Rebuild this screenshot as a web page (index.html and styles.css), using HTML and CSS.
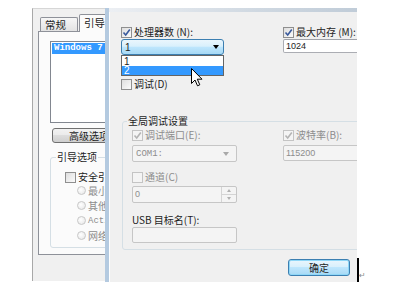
FILE: index.html
```html
<!DOCTYPE html>
<html lang="zh-CN">
<head>
    <meta charset="UTF-8">
    <title>系统配置</title>
    <link rel="stylesheet" href="styles.css">
</head>
<body>
    <div class="scene">
        <!-- system configuration window, behind -->
        <div class="back-win">
            <div class="tabs">
                <div class="tab">常规</div>
                <div class="tab active">引导</div>
            </div>
            <div class="tab-panel">
                <div class="listbox">
                    <div class="list-item selected">Windows 7</div>
                </div>
                <div class="btn adv-btn">高级选项(V)...</div>
                <fieldset class="group boot-group">
                    <legend>引导选项</legend>
                    <div class="check-row"><span class="cb"></span>安全引导(F)</div>
                    <div class="radio-row"><span class="rb"></span>最小(N)</div>
                    <div class="radio-row"><span class="rb"></span>其他外壳(L)</div>
                    <div class="radio-row"><span class="rb"></span><span class="latin">Active Directory</span></div>
                    <div class="radio-row"><span class="rb"></span>网络(W)</div>
                </fieldset>
            </div>
        </div>

        <!-- boot advanced options dialog -->
        <div class="front-win">
            <div class="frame-top"></div>
            <div class="front-body">
                <div class="top-grid">
                    <div class="col">
                        <div class="check-row">
                            <span class="cb checked"><svg width="9" height="9" viewBox="0 0 9 9"><path d="M1.5 4.5 L3.7 7 L7.8 1.5" fill="none" stroke="#3a5a9c" stroke-width="1.6"/></svg></span>
                            处理器数 (N):
                        </div>
                        <div class="combo-wrap">
                            <div class="combo focused">
                                <span class="combo-val">1</span>
                                <span class="arrow"></span>
                            </div>
                            <div class="dropdown">
                                <div class="dd-item">1</div>
                                <div class="dd-item selected">2</div>
                            </div>
                            <svg class="pointer" width="12" height="19" viewBox="0 0 12 19">
                                <path d="M0.5 0.5 L0.5 15.5 L4 12 L6.5 17.8 L8.8 16.8 L6.3 11.2 L11 11.2 Z" fill="#fff" stroke="#000" stroke-width="1"/>
                            </svg>
                        </div>
                        <div class="check-row debug-row"><span class="cb"></span>调试(D)</div>
                    </div>
                    <div class="col">
                        <div class="check-row">
                            <span class="cb checked"><svg width="9" height="9" viewBox="0 0 9 9"><path d="M1.5 4.5 L3.7 7 L7.8 1.5" fill="none" stroke="#3a5a9c" stroke-width="1.6"/></svg></span>
                            最大内存 (M):
                        </div>
                        <div class="textbox mem-box">1024</div>
                    </div>
                </div>

                <fieldset class="group debug-group">
                    <legend>全局调试设置</legend>
                    <div class="group-cols">
                        <div class="gcol left">
                            <div class="check-row disabled">
                                <span class="cb checked"><svg width="9" height="9" viewBox="0 0 9 9"><path d="M1.5 4.5 L3.7 7 L7.8 1.5" fill="none" stroke="#b4b4b4" stroke-width="1.6"/></svg></span>
                                调试端口(E):
                            </div>
                            <div class="combo disabled">
                                <span class="combo-val mono">COM1:</span>
                                <span class="arrow grey"></span>
                            </div>
                            <div class="check-row disabled channel-row"><span class="cb"></span>通道(C)</div>
                            <div class="spinner">
                                <span class="spin-val">0</span>
                                <span class="spin-btns">
                                    <span class="spin-up"></span>
                                    <span class="spin-down"></span>
                                </span>
                            </div>
                            <div class="label-row">USB 目标名(T):</div>
                            <div class="textbox disabled usb-box"></div>
                        </div>
                        <div class="gcol right">
                            <div class="check-row disabled">
                                <span class="cb checked"><svg width="9" height="9" viewBox="0 0 9 9"><path d="M1.5 4.5 L3.7 7 L7.8 1.5" fill="none" stroke="#b4b4b4" stroke-width="1.6"/></svg></span>
                                波特率(B):
                            </div>
                            <div class="textbox disabled baud-box">115200</div>
                        </div>
                    </div>
                </fieldset>

                <div class="btn-row">
                    <div class="btn ok-btn">确定</div>
                </div>
            </div>
        </div>

        <div class="caret"></div>
        <div class="para-mark">↵</div>
    </div>
</body>
</html>
```

FILE: styles.css
```css
body {
    margin: 0;
    background-color: #fff;
    font-family: "Noto Sans CJK SC", "Liberation Sans", sans-serif;
    font-size: 10px;
    color: #1e1e1e;
}
.scene {
    display: flex;
    align-items: flex-start;
    padding: 8px 0 0 32px;
    height: 277px;
    overflow: hidden;
}

/* back window */
.back-win {
    width: 73px;
    height: 273px;
    box-sizing: border-box;
    flex-shrink: 0;
    background-color: #f0f0f0;
    border-left: 1px solid #a8a8a8;
    border-top: 1px solid #d6d6d6;
    padding: 5px 0 0 5px;
    overflow: hidden;
}
.tabs {
    display: flex;
    align-items: flex-end;
    height: 17px;
    padding-left: 2px;
    width: 200px;
}
.tab {
    width: 38px;
    height: 14px;
    box-sizing: border-box;
    border: 1px solid #8e9199;
    border-bottom: none;
    border-radius: 2px 2px 0 0;
    background: linear-gradient(#f6f6f6, #e3e3e3);
    padding-left: 4px;
    line-height: 13px;
    font-size: 10.5px;
}
.tab.active {
    width: 60px;
    height: 18px;
    margin-left: 1px;
    margin-bottom: -1px;
    background: #fbfbfb;
    line-height: 15px;
    position: relative;
}
.tab-panel {
    width: 200px;
    height: 224px;
    box-sizing: border-box;
    border: 1px solid #8e9199;
    background-color: #fbfbfb;
    padding: 9px 0 0 11px;
}
.listbox {
    width: 150px;
    height: 82px;
    box-sizing: border-box;
    border: 1px solid #828790;
    background: #fff;
    padding: 1px 0 0 1px;
}
.list-item {
    font-family: "Liberation Mono", monospace;
    font-size: 9px;
    font-weight: bold;
    line-height: 11px;
    padding-left: 2px;
}
.list-item.selected {
    background-color: #3399ff;
    color: #fff;
}
.btn {
    box-sizing: border-box;
    border: 1px solid #707070;
    border-radius: 3px;
    background: linear-gradient(#f2f2f2, #ebebeb 45%, #dddddd 50%, #cfcfcf);
    white-space: nowrap;
}
.adv-btn {
    margin: 5px 0 0 2px;
    width: 120px;
    height: 15px;
    line-height: 13px;
    padding-left: 16px;
}
.group {
    margin: 0;
    border: 1px solid #d5dfe5;
    border-radius: 3px;
    min-width: 0;
}
.group legend {
    padding: 0 1px;
    line-height: 12px;
}
.boot-group {
    margin-top: 8px;
    width: 150px;
    height: 97px;
    box-sizing: border-box;
    padding: 8px 0 0 14px;
}
.boot-group legend {
    margin-left: -9px;
}
.check-row {
    display: flex;
    align-items: center;
    gap: 2px;
    height: 12px;
    line-height: 12px;
    white-space: nowrap;
}
.cb {
    width: 11px;
    height: 11px;
    box-sizing: border-box;
    border: 1px solid #8f8f8f;
    background: linear-gradient(135deg, #dedede, #fbfbfb);
    display: inline-flex;
    align-items: center;
    justify-content: center;
    flex-shrink: 0;
}
.radio-row {
    display: flex;
    align-items: center;
    gap: 2px;
    height: 15px;
    margin-left: 12px;
    color: #8d8d8d;
    white-space: nowrap;
}
.rb {
    width: 9px;
    height: 9px;
    box-sizing: border-box;
    border: 1px solid #c8c8c8;
    border-radius: 50%;
    background: radial-gradient(circle at 40% 40%, #fff, #e4e4e4);
    flex-shrink: 0;
}
.latin {
    font-family: "Liberation Mono", monospace;
    font-size: 9px;
}

/* front dialog */
.front-win {
    width: 252px;
    height: 274px;
    box-sizing: border-box;
    flex-shrink: 0;
    background-color: #f0f0f0;
    border-left: 4px solid #b4cae0;
    box-shadow: inset 1px 0 0 #ffffff;
    overflow: hidden;
    display: flex;
    flex-direction: column;
}
.frame-top {
    height: 4px;
    flex-shrink: 0;
    background: linear-gradient(90deg, #eceff3, #cfd8e1 60%, #c0ccd8);
}
.front-body {
    padding: 14px 0 0 12px;
    width: 300px;
}
.top-grid {
    display: grid;
    grid-template-columns: 162px 120px;
}
.combo-wrap {
    position: relative;
    margin-top: 1px;
    width: 103px;
}
.combo {
    height: 16px;
    box-sizing: border-box;
    border: 1px solid #3c7fb1;
    border-radius: 3px;
    display: flex;
    align-items: center;
    padding: 0 4px 0 3px;
    font-family: "Liberation Sans", sans-serif;
    font-size: 10px;
}
.combo.focused {
    background: linear-gradient(#eaf6fd, #d9f0fc 45%, #bee6fd 50%, #a7d9f5);
}
.combo.disabled {
    width: 105px;
    height: 17px;
    margin-top: 4px;
    border-color: #c6c6c6;
    border-radius: 2px;
    background: #f4f4f4;
    color: #8d8d8d;
}
.mono {
    font-family: "Liberation Mono", monospace;
    font-size: 9px;
}
.arrow {
    margin-left: auto;
    width: 0;
    height: 0;
    border-left: 3.5px solid transparent;
    border-right: 3.5px solid transparent;
    border-top: 4px solid #000;
}
.arrow.grey {
    border-top-color: #a9a9a9;
    margin-right: 3px;
}
.dropdown {
    position: absolute;
    top: 16px;
    left: 0;
    width: 103px;
    box-sizing: border-box;
    border: 1px solid #646464;
    background: #fff;
    font-family: "Liberation Sans", sans-serif;
    font-size: 10px;
    line-height: 9px;
    padding-top: 1px;
}
.dd-item {
    height: 9px;
    padding-left: 2px;
}
.dd-item.selected {
    background-color: #3399ff;
    color: #fff;
}
.pointer {
    position: absolute;
    left: 70px;
    top: 29px;
}
.debug-row {
    margin-top: 23px;
}
.textbox {
    margin-top: 1px;
    height: 14px;
    width: 100px;
    box-sizing: border-box;
    border: 1px solid #abadb3;
    border-top-color: #a0a3aa;
    border-radius: 2px;
    background: #fff;
    font-family: "Liberation Sans", sans-serif;
    font-size: 9px;
    line-height: 12px;
    padding-left: 2px;
}
.textbox.disabled {
    background: #f4f4f4;
    border-color: #c6c6c6;
    color: #8d8d8d;
}

/* global debug settings */
.debug-group {
    margin: 25px 0 0 1px;
    width: 270px;
    box-sizing: border-box;
    padding: 2px 0 6px 9px;
}
.debug-group legend {
    margin-left: -5px;
}
.group-cols {
    display: flex;
    gap: 46px;
}
.gcol.left {
    width: 105px;
}
.check-row.disabled {
    color: #8d8d8d;
}
.check-row.disabled .cb {
    border-color: #c4c4c4;
    background: #f4f4f4;
}
.channel-row {
    margin-top: 9px;
}
.spinner {
    margin-top: 3px;
    height: 17px;
    box-sizing: border-box;
    border: 1px solid #c6c6c6;
    border-radius: 2px;
    background: #f4f4f4;
    display: flex;
    color: #8d8d8d;
    font-family: "Liberation Sans", sans-serif;
    font-size: 9px;
}
.spin-val {
    flex: 1;
    line-height: 15px;
    padding-left: 2px;
}
.spin-btns {
    width: 14px;
    display: flex;
    flex-direction: column;
    border-left: 1px solid #d4d4d4;
}
.spin-up, .spin-down {
    flex: 1;
    display: flex;
    align-items: center;
    justify-content: center;
}
.spin-up {
    border-bottom: 1px solid #d4d4d4;
}
.spin-up::after {
    content: "";
    border-left: 2.5px solid transparent;
    border-right: 2.5px solid transparent;
    border-bottom: 3px solid #b0b0b0;
}
.spin-down::after {
    content: "";
    border-left: 2.5px solid transparent;
    border-right: 2.5px solid transparent;
    border-top: 3px solid #b0b0b0;
}
.label-row {
    margin-top: 11px;
    height: 12px;
    line-height: 12px;
    white-space: nowrap;
}
.usb-box {
    width: 105px;
    height: 16px;
}
.baud-box {
    margin-top: 4px;
    height: 16px;
    line-height: 14px;
}
.btn-row {
    margin-top: 9px;
    padding-left: 167px;
}
.ok-btn {
    width: 62px;
    height: 17px;
    border-color: #3c7fb1;
    background: linear-gradient(#eaf6fd, #d9f0fc 45%, #bee6fd 50%, #a7d9f5);
    box-shadow: inset 0 0 0 1px #8fd7f7;
    text-align: center;
    line-height: 15px;
}

/* word caret + paragraph mark */
.caret {
    width: 2px;
    height: 24px;
    margin-top: 250px;
    background: #000;
    flex-shrink: 0;
}
.para-mark {
    margin-top: 263px;
    font-family: "DejaVu Sans", sans-serif;
    font-size: 8px;
    line-height: 10px;
    color: #8a8a8a;
}
```
